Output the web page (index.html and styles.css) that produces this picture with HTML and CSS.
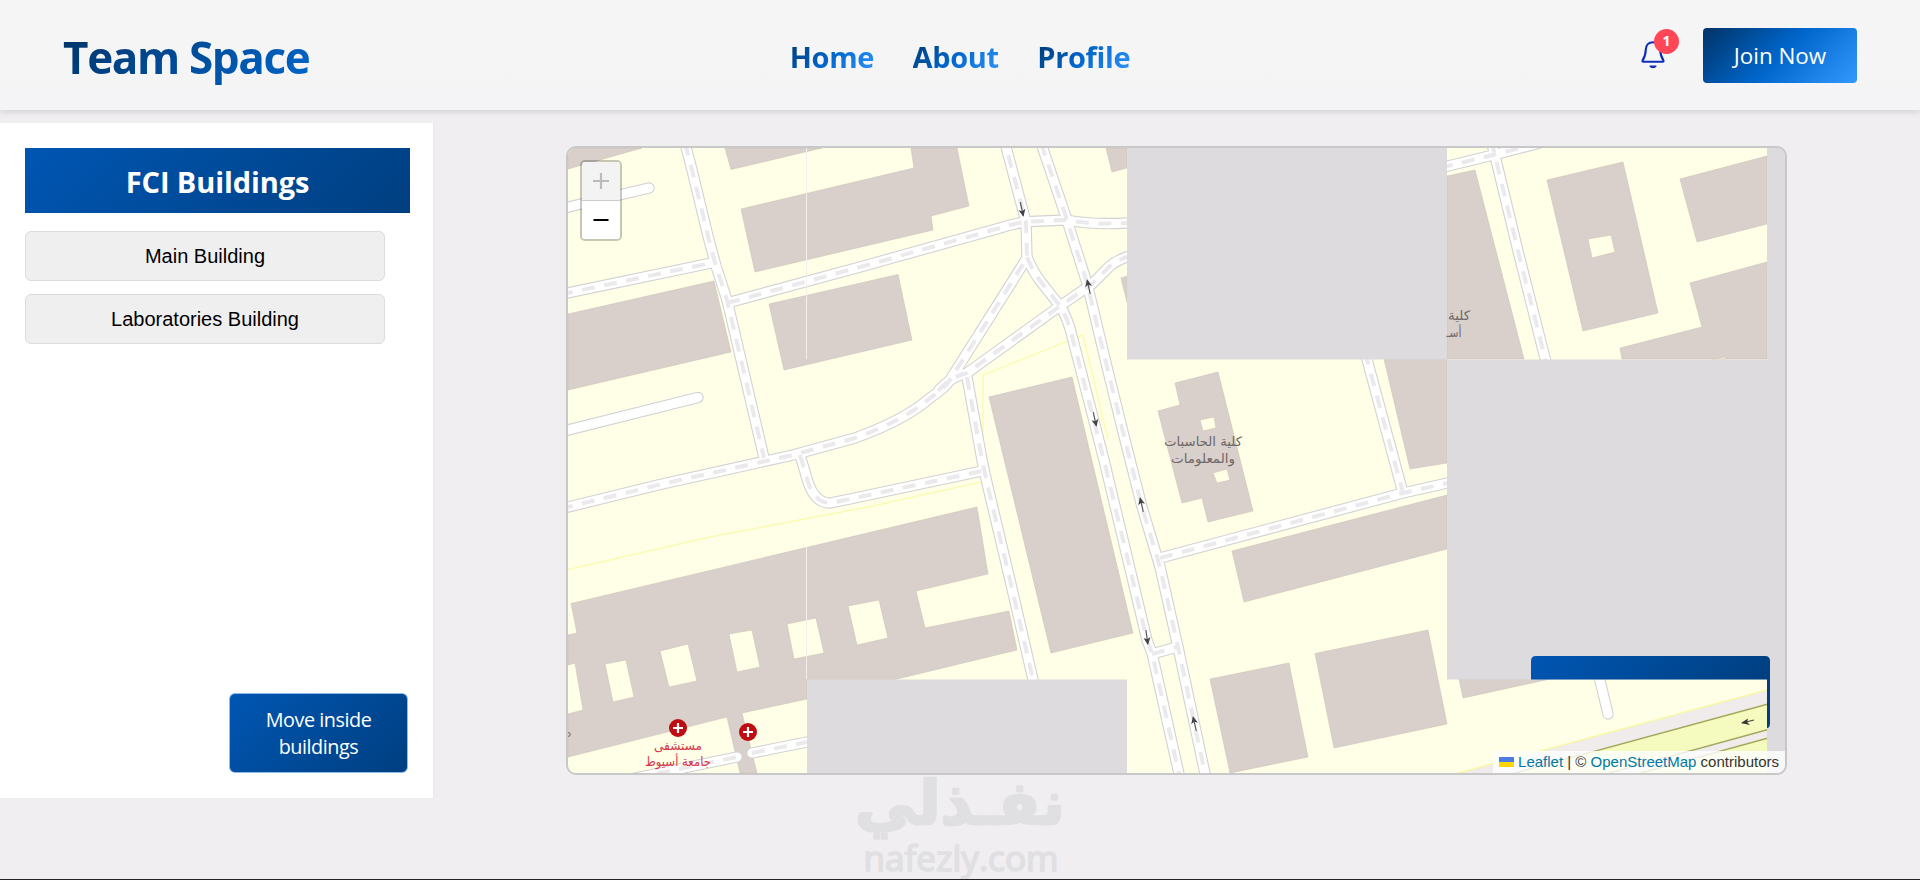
FILE: index.html
```html
<!DOCTYPE html>
<html lang="en">
<head>
<meta charset="utf-8">
<title>Team Space</title>
<link rel="stylesheet" href="styles.css">
</head>
<body>
<header class="header">
  <div class="brand"><span class="brand-name">Team Space</span></div>
  <nav class="nav">
    <a class="nav-link">Home</a>
    <a class="nav-link">About</a>
    <a class="nav-link">Profile</a>
  </nav>
  <div class="actions">
    <div class="bell">
      <svg width="26" height="30" viewBox="0 0 26 30">
        <path d="M13 2.2C8.6 2.2 6 5.4 5.8 9.6C5.6 14 5.2 16.500 2.600 20.400C2.200 21.100 2.500 21.700 3.200 21.700H22.800C23.500 21.700 23.800 21.100 23.400 20.400C20.800 16.500 20.400 14 20.200 9.600C20 5.400 17.400 2.200 13 2.200Z" fill="none" stroke="#0c2fb8" stroke-width="2.100" stroke-linejoin="round"/>
        <path d="M10 26.200C11.400 28.200 14.600 28.200 16 26.200Z" fill="#0c2fb8" stroke="#0c2fb8" stroke-width="1.200" stroke-linejoin="round"/>
      </svg>
      <span class="badge">1</span>
    </div>
    <button class="join">Join Now</button>
  </div>
</header>

<main class="content">
  <aside class="sidebar">
    <h2 class="side-title">FCI Buildings</h2>
    <button class="building">Main Building</button>
    <button class="building">Laboratories Building</button>
    <button class="move">Move inside<br>buildings</button>
  </aside>

  <section class="map">
    <svg class="tiles" width="1217" height="625" viewBox="568 148 1217 625">
      <defs>
        <linearGradient id="blue" x1="0" y1="0" x2="1" y2="0.3">
          <stop offset="0" stop-color="#0056b3"/><stop offset="1" stop-color="#003f80"/>
        </linearGradient>
        <g id="arrow"><path d="M0 -8V6" stroke="#555" stroke-width="1.200"/><path d="M-3.500 -0.500L0 7L3.500 -0.500L0 1.200Z" fill="#444"/></g>
        <g id="cross"><circle r="9" fill="#bf0b12"/><path d="M0 -5V5M-5 0H5" stroke="#fff" stroke-width="2.200"/></g>
        <g id="roads">
          <path d="M685 143L692 170L709 240L716 266L727 300L764 458"/>
          <path d="M560 294.500L716 262"/>
          <path d="M727 303L860 267L1000 228Q1015 223 1030 221.500L1066 220Q1092 225 1127 223"/>
          <path d="M560 509L660 484.500L793 455L855 438Q905 420 930 398Q945 388 950 380L1027 258L1026 222L1005 143"/>
          <path d="M938 391Q950 377 967 373L1060 306L1092 284L1110 266Q1117 260 1132 255"/>
          <path d="M1027 257Q1032 270 1041 282L1060 306Q1068 318 1073 340L1104 460L1147 640L1152 653L1181 783"/>
          <path d="M1041 143L1065 214L1087 283L1107 367L1125 440L1142 507L1160 567L1178 647L1207 783"/>
          <path d="M1152 654L1177 647"/>
          <path d="M1160 558L1403 493L1452 482"/>
          <path d="M1365 352L1403 493"/>
          <path d="M967 377L982 460L987 483L1010 580L1034 684"/>
          <path d="M800 455L808 482Q815 503 830 503L850 499L982 471"/>
          <path d="M1440 168L1493 155L1540 143"/>
          <path d="M1491 140L1496 160L1519 255L1547 366"/>
        </g>
        <g id="lanes">
          <path d="M560 209L649 188"/>
          <path d="M560 432L698 397.500"/>
          <path d="M1597 668L1608 714"/>
        </g>
        <path id="hospital-road" d="M635 778L737 757M752 753L812 741"/>
      </defs>

      <rect class="land" x="568" y="148" width="1199" height="625"/>
      <g class="buildings">
        <path d="M568 148H642L568 169Z"/>
        <path d="M725 148L731 169.500L822 148Z"/>
        <path d="M741 209L914 168L911 148H957L969 206L931 216L933 230L755 272Z"/>
        <path d="M769 304L898 274.500L912 340L784 370Z"/>
        <path d="M568 314L714 281L731 352L568 390Z"/>
        <path d="M1106 148L1112 172L1127 168V148Z"/>
        <path d="M1121 278L1127 276V302Z"/>
        <path d="M989 397L1072 377L1133 633L1051 653Z"/>
        <path fill-rule="evenodd" d="M571 603.500L977 507L988 574L916 591L925 628L1009 611L1017 650L893 680H807V699L742 713L757 773H740L727 717L568 757V714L583 710L575 663L568 665V635L577 633ZM605 664L626 660L634 697L613 702ZM660 651L688 644L697 681L669 687ZM729 634L752 630L760 667L737 672ZM787 624L816 618L824 653L794 659ZM848 606L879 600L888 638L857 645Z"/>
        <path fill-rule="evenodd" d="M1175 383L1218 372L1253 511L1208 522L1202 498L1182 503L1158 411L1180 405ZM1200 420L1214 417L1216 428L1203 431ZM1213 473L1227 469L1230 480L1217 483Z"/>
        <path d="M1232 551L1447 495V549L1244 602Z"/>
        <path d="M1384 359H1447V463L1410 469Z"/>
        <path d="M1210 679L1289 663L1308 757L1230 773Z"/>
        <path d="M1315 653.500L1428 630L1447 724L1334 748Z"/>
        <path d="M1459 679H1550L1463 698Z"/>
        <path d="M1447 176L1475 170L1524 359H1447Z"/>
        <path fill-rule="evenodd" d="M1547 180L1623 162L1658 313L1583 331ZM1588 239L1611 235L1615 252L1592 258Z"/>
        <path d="M1680 179L1767 156V224L1697 242Z"/>
        <path fill-rule="evenodd" d="M1690 283L1767 262V359H1622L1620 348L1702 327ZM1712 359L1726 357V359Z"/>
      </g>
      <path class="boundary" d="M568 569.500L710 537L868 507L981 482M983 450V375L1083 335L1108 440"/>

      <path d="M1767 690L1455 774H1767Z" fill="#f0eceb"/>
      <path d="M1767 690L1455 774" stroke="#f8f8a6" stroke-width="1.500"/>
      <path d="M1767 704L1500 777H1590L1767 730Z" fill="#f5fabf"/>
      <path d="M1767 738L1630 775H1767Z" fill="#f5fabf"/>
      <path d="M1770 703.500L1500 777M1770 729L1595 777M1770 737.500L1630 776" stroke="#a6a75f" stroke-width="1.400"/>
      <path d="M1742 723L1754 720" stroke="#444" stroke-width="1.200"/><path d="M1741 723L1748 718.500L1747 722L1750 725Z" fill="#333"/>

      <g class="road-layer">
        <use href="#lanes" class="casing round"/><use href="#lanes" class="surface round"/>
        <use href="#roads" class="casing"/><use href="#roads" class="surface"/><use href="#roads" class="dashes"/>
        <use href="#hospital-road" class="casing round"/><use href="#hospital-road" class="surface round"/><use href="#hospital-road" class="dashes"/>
      </g>
      <use href="#arrow" transform="translate(1022 210) rotate(-12)"/>
      <use href="#arrow" transform="translate(1088.500 286) rotate(168)"/>
      <use href="#arrow" transform="translate(1095 420) rotate(-13)"/>
      <use href="#arrow" transform="translate(1141.500 504) rotate(167)"/>
      <use href="#arrow" transform="translate(1147 638) rotate(-8)"/>
      <use href="#arrow" transform="translate(1194.500 723) rotate(167)"/>

      <path class="seam" d="M806.500 148V359M806.500 547V679"/>
      <path class="missing" d="M1127 148H1447V359.500H1127ZM1447 359.500H1785V679.500H1447ZM807 679.500H1127V773H807ZM1767 148H1785V773H1767Z"/>
      <path fill="url(#blue)" d="M1531 679.500V661Q1531 656 1536 656H1765Q1770 656 1770 661V723Q1770 728 1767 728V679.500Z"/>

      <g class="labels">
        <text x="1203" y="446" textLength="78" lengthAdjust="spacingAndGlyphs">كلية الحاسبات</text>
        <text x="1203" y="463" textLength="64" lengthAdjust="spacingAndGlyphs">والمعلومات</text>
        <text x="1459" y="320" textLength="22" lengthAdjust="spacingAndGlyphs">كلية</text>
        <text x="1454" y="337" textLength="15" lengthAdjust="spacingAndGlyphs">أسـ</text>
        <text class="hospital" x="678" y="750" textLength="48" lengthAdjust="spacingAndGlyphs">مستشفى</text>
        <text class="hospital" x="678" y="766" textLength="66" lengthAdjust="spacingAndGlyphs">جامعة أسيوط</text>
      </g>
      <use href="#cross" x="678" y="728"/>
      <use href="#cross" x="748" y="732"/>
      <circle cx="568.500" cy="734.500" r="1.800" fill="none" stroke="#666"/>
    </svg>
    <div class="zoom">
      <a class="zoom-btn disabled"><svg width="16" height="16" viewBox="0 0 16 16"><path d="M0 8H16M8 0V16"/></svg></a>
      <a class="zoom-btn"><svg width="16" height="16" viewBox="0 0 16 16"><path d="M0.500 8H15.500"/></svg></a>
    </div>
    <div class="attribution">
      <svg width="15" height="10" viewBox="0 0 15 10"><path fill="#4c7be1" d="M0 0H15V5H0Z"/><path fill="#ffd500" d="M0 5H15V10H0Z"/></svg>
      <a>Leaflet</a> | © <a>OpenStreetMap</a> contributors
    </div>
  </section>
</main>

<svg class="watermark" width="240" height="118" viewBox="840 762 240 118">
  <text class="wm-ar" x="960" y="824" textLength="210" lengthAdjust="spacingAndGlyphs">نفـذلي</text>
  <text class="wm-en" x="961" y="871" textLength="195" lengthAdjust="spacingAndGlyphs">nafezly.com</text>
</svg>
</body>
</html>
```
FILE: styles.css
```css
* { box-sizing: border-box; }

body {
  margin: 0;
  height: 880px;
  overflow: hidden;
  position: relative;
  background: #f0eef1;
  border-bottom: 1px solid #222;
  font-family: "Open Sans", "Noto Sans", sans-serif;
}

button { font-family: inherit; margin: 0; padding: 0; }

.header {
  height: 110px;
  padding: 0 63px;
  display: grid;
  grid-template-columns: 1fr auto 1fr;
  align-items: center;
  background: linear-gradient(#f5f5f5 60%, #f4f3f6);
  box-shadow: 0 2px 6px rgba(0, 0, 0, .12);
}

.brand-name {
  display: inline-block;
  padding-top: 4px;
  font-size: 44px;
  font-weight: 700;
  line-height: 60px;
  letter-spacing: -1.350px;
  background: linear-gradient(135deg, #003366, #0066cc);
  -webkit-background-clip: text;
  background-clip: text;
  color: transparent;
}

.nav { display: flex; gap: 38.500px; }

.nav-link {
  padding-top: 3px;
  font-size: 29px;
  font-weight: 700;
  line-height: 40px;
  letter-spacing: -0.350px;
  background: linear-gradient(135deg, #003366, #0066cc 50%, #3399ff);
  -webkit-background-clip: text;
  background-clip: text;
  color: transparent;
}

.actions { display: flex; justify-content: flex-end; align-items: center; gap: 37px; }
.bell { position: relative; width: 26px; height: 30px; }
.bell svg { display: block; }

.badge {
  position: absolute;
  left: 14px;
  top: -11px;
  width: 25px;
  height: 25px;
  border-radius: 50%;
  background: #ff4757;
  color: #fff;
  font-size: 14px;
  font-weight: 700;
  line-height: 24px;
  text-align: center;
}

.join {
  width: 154px;
  height: 55px;
  padding-top: 1px;
  border: 0;
  border-radius: 4px;
  background: linear-gradient(135deg, #003366, #0066cc 50%, #3399ff);
  color: #fff;
  font-size: 22.400px;
}

.content { display: flex; align-items: flex-start; padding-top: 13px; }

.sidebar {
  width: 433px;
  height: 675px;
  padding: 25px 23px 25px 25px;
  display: flex;
  flex-direction: column;
  background: #fff;
  box-shadow: 2px 0 2px rgba(0, 0, 0, .02);
}

.side-title {
  width: 385px;
  height: 65px;
  margin: 0 0 18px;
  background: linear-gradient(135deg, #0056b3, #003f80);
  color: #fff;
  font-size: 29px;
  font-weight: 700;
  line-height: 67px;
  letter-spacing: -0.100px;
  text-align: center;
}

.building {
  width: 360px;
  height: 50px;
  margin-bottom: 13px;
  border: 1px solid #dcdcdc;
  border-radius: 6px;
  background: #f0eff0;
  color: #000;
  font-family: "Liberation Sans", Arial, sans-serif;
  font-size: 20px;
}

.move {
  width: 179px;
  height: 80px;
  margin-top: auto;
  margin-right: 2px;
  align-self: flex-end;
  border: 1px solid #8dbbe8;
  border-radius: 6px;
  background: linear-gradient(135deg, #0056b3, #003f80);
  color: #fff;
  font-size: 19.800px;
  line-height: 27px;
  letter-spacing: -0.450px;
}

.map {
  position: relative;
  width: 1221px;
  height: 629px;
  margin: 23px 0 0 133px;
  border: 2px solid #c8c8c8;
  border-radius: 10px;
  overflow: hidden;
  background: #dddbdd;
}

.tiles { display: block; }
.land { fill: #feffe6; }
.buildings { fill: #d9cfcb; stroke: #cfc2ba; stroke-width: .6; }
.boundary { fill: none; stroke: #fbfbb4; stroke-width: 1.500; }
.road-layer use { fill: none; }
.casing { stroke: #d3d2d3; stroke-width: 11.400; }
.surface { stroke: #fff; stroke-width: 9.200; }
.round { stroke-linecap: round; }
.dashes { stroke: #ece9ed; stroke-width: 4; stroke-dasharray: 13 9.500; }
.seam { stroke: #f4efec; stroke-width: 1; }
.missing { fill: #dddbdd; }

.labels {
  font-family: "DejaVu Sans", sans-serif;
  font-size: 13px;
  text-anchor: middle;
  direction: rtl;
  fill: #6f6968;
}

.labels .hospital { fill: #d5394a; }

.zoom {
  position: absolute;
  left: 12px;
  top: 12px;
  width: 42px;
  border: 2px solid rgba(0, 0, 0, .22);
  border-radius: 5px;
  background-clip: padding-box;
  overflow: hidden;
}

.zoom-btn {
  display: flex;
  align-items: center;
  justify-content: center;
  height: 38px;
  background: #fff;
}

.zoom-btn svg { fill: none; stroke: #000; stroke-width: 2.200; }

.zoom-btn.disabled {
  height: 39px;
  background: #f4f3f4;
  border-bottom: 1px solid #ccc;
}

.zoom-btn.disabled svg { stroke: #bbb; }

.attribution {
  position: absolute;
  right: 0;
  bottom: 0;
  height: 22px;
  padding: 0 6px;
  background: rgba(255, 255, 255, .8);
  color: #333;
  font: 15px/22px "Liberation Sans", Arial, sans-serif;
  white-space: nowrap;
}

.attribution a { color: #0078a8; }

.watermark {
  position: absolute;
  left: 840px;
  top: 762px;
  fill: #e0dfe1;
  stroke: #e0dfe1;
  stroke-linejoin: round;
}

.watermark text { text-anchor: middle; }
.wm-ar { direction: rtl; font: bold 60px "DejaVu Sans", sans-serif; stroke-width: 2.500; }
.wm-en { font: 34px "Open Sans", sans-serif; stroke-width: 1.600; }
```
